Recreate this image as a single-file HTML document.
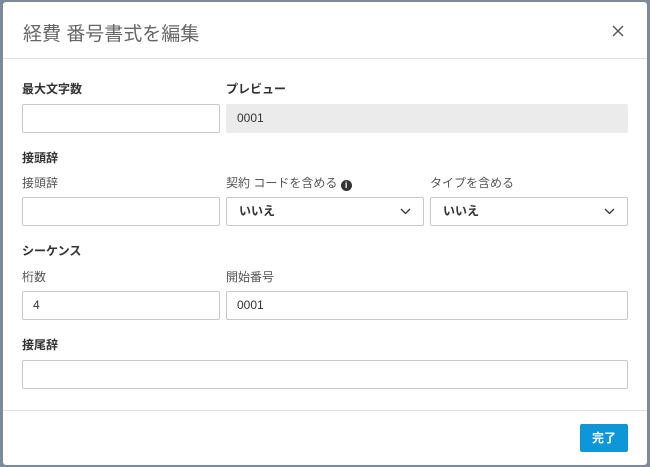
<!DOCTYPE html>
<html><head><meta charset="utf-8"><style>
body{margin:0;width:650px;height:467px;background:#7d8a99;position:relative;overflow:hidden;font-family:"Liberation Sans","Noto Sans CJK JP",sans-serif;}
.m{position:absolute;left:3px;top:2px;width:644px;height:463px;background:#fff;border-radius:3px;}
.a{position:absolute;}
.t{font-size:19px;color:#666;left:20px;top:17px;}
.hr{left:0;width:644px;height:1px;background:#e0e0e0;}
.lb{font-size:12px;font-weight:bold;color:#333;}
.ll{font-size:12px;color:#555;}
.in{border:1px solid #c8c8c8;border-radius:2px;height:29px;box-sizing:border-box;background:#fff;font-size:12px;color:#333;line-height:27px;padding-left:10px;}
.sel{font-weight:bold;padding-left:12px;}
.chev{position:absolute;right:12px;top:10px;}
.btn{left:577px;top:422px;width:48px;height:28px;background:#0d97d8;color:#fff;font-size:12px;font-weight:bold;text-align:center;line-height:28px;border-radius:2px;}
</style></head><body>
<div class="m">
<div class="a t">経費 番号書式を編集</div>
<svg class="a" style="left:609px;top:23px" width="12" height="12"><path d="M1 1L11 11M11 1L1 11" stroke="#555" stroke-width="1.4"/></svg>
<div class="a hr" style="top:56px"></div>
<div class="a lb" style="left:19px;top:78px">最大文字数</div>
<div class="a lb" style="left:223px;top:78px">プレビュー</div>
<div class="a in" style="left:19px;top:102px;width:198px"></div>
<div class="a in" style="left:223px;top:102px;width:402px;background:#ebebeb;border-color:#ebebeb">0001</div>
<div class="a lb" style="left:19px;top:147px">接頭辞</div>
<div class="a ll" style="left:19px;top:172px">接頭辞</div>
<div class="a ll" style="left:223px;top:172px">契約 コードを含める <span style="display:inline-block;width:11px;height:11px;border-radius:50%;background:#333;color:#fff;font-size:9px;line-height:11px;text-align:center;font-weight:bold;vertical-align:-1px">i</span></div>
<div class="a ll" style="left:427px;top:172px">タイプを含める</div>
<div class="a in" style="left:19px;top:195px;width:198px"></div>
<div class="a in sel" style="left:223px;top:195px;width:198px">いいえ<svg class="chev" width="11" height="7"><path d="M1 1L5.5 5.5L10 1" stroke="#333" stroke-width="1.3" fill="none"/></svg></div>
<div class="a in sel" style="left:427px;top:195px;width:198px">いいえ<svg class="chev" width="11" height="7"><path d="M1 1L5.5 5.5L10 1" stroke="#333" stroke-width="1.3" fill="none"/></svg></div>
<div class="a lb" style="left:19px;top:240px">シーケンス</div>
<div class="a ll" style="left:19px;top:266px">桁数</div>
<div class="a ll" style="left:223px;top:266px">開始番号</div>
<div class="a in" style="left:19px;top:289px;width:198px">4</div>
<div class="a in" style="left:223px;top:289px;width:402px">0001</div>
<div class="a lb" style="left:19px;top:334px">接尾辞</div>
<div class="a in" style="left:19px;top:358px;width:606px"></div>
<div class="a hr" style="top:408px"></div>
<div class="a btn">完了</div>
</div>
</body></html>
